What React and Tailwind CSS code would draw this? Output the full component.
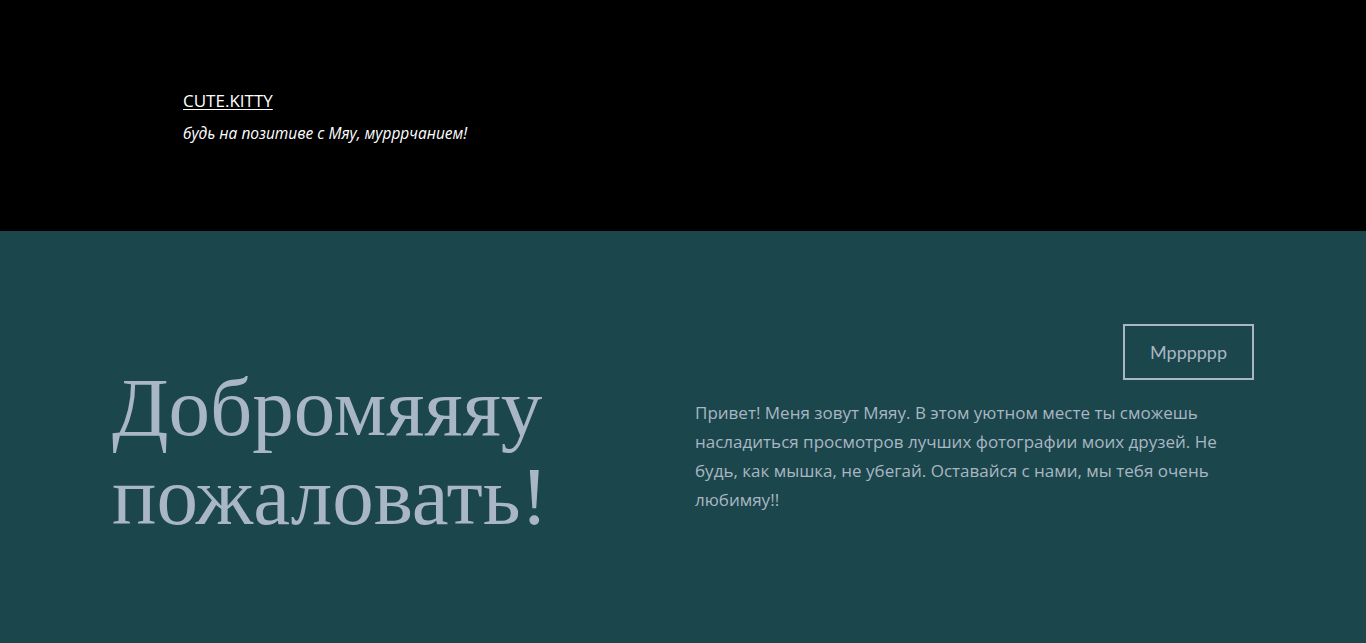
export default function App() {
  return (
    <div className="min-h-screen bg-[#1b464b]">
      <header className="bg-black h-[231px] pt-[88px] pl-[183px] text-white">
        <a href="#" className="text-[17px] underline underline-offset-2 font-['Open_Sans',sans-serif]">
          CUTE.KITTY
        </a>
        <p className="mt-[8px] text-[15.5px] italic font-['Open_Sans',sans-serif]">
          будь на позитиве с Мяу, мурррчанием!
        </p>
      </header>

      <section className="flex pl-[112px] pr-[112px] pt-[93px] text-[#a9b6c4]">
        <h1 className="w-[583px] pt-[39px] text-[83px] leading-[89px] font-['Liberation_Serif',serif]">
          Добромяяяу пожаловать!
        </h1>
        <div className="flex-1 flex flex-col">
          <div className="flex justify-end">
            <button className="w-[131px] h-[56px] border-2 border-[#a9b6c4] text-[18px] font-['Lato',sans-serif]">
              Мрррррр
            </button>
          </div>
          <p className="mt-[18px] text-[17px] leading-[29px] font-['Open_Sans',sans-serif]">
            Привет! Меня зовут Мяяу. В этом уютном месте ты сможешь насладиться просмотров лучших фотографии моих друзей. Не будь, как мышка, не убегай. Оставайся с нами, мы тебя очень любимяу!!
          </p>
        </div>
      </section>
    </div>
  );
}
